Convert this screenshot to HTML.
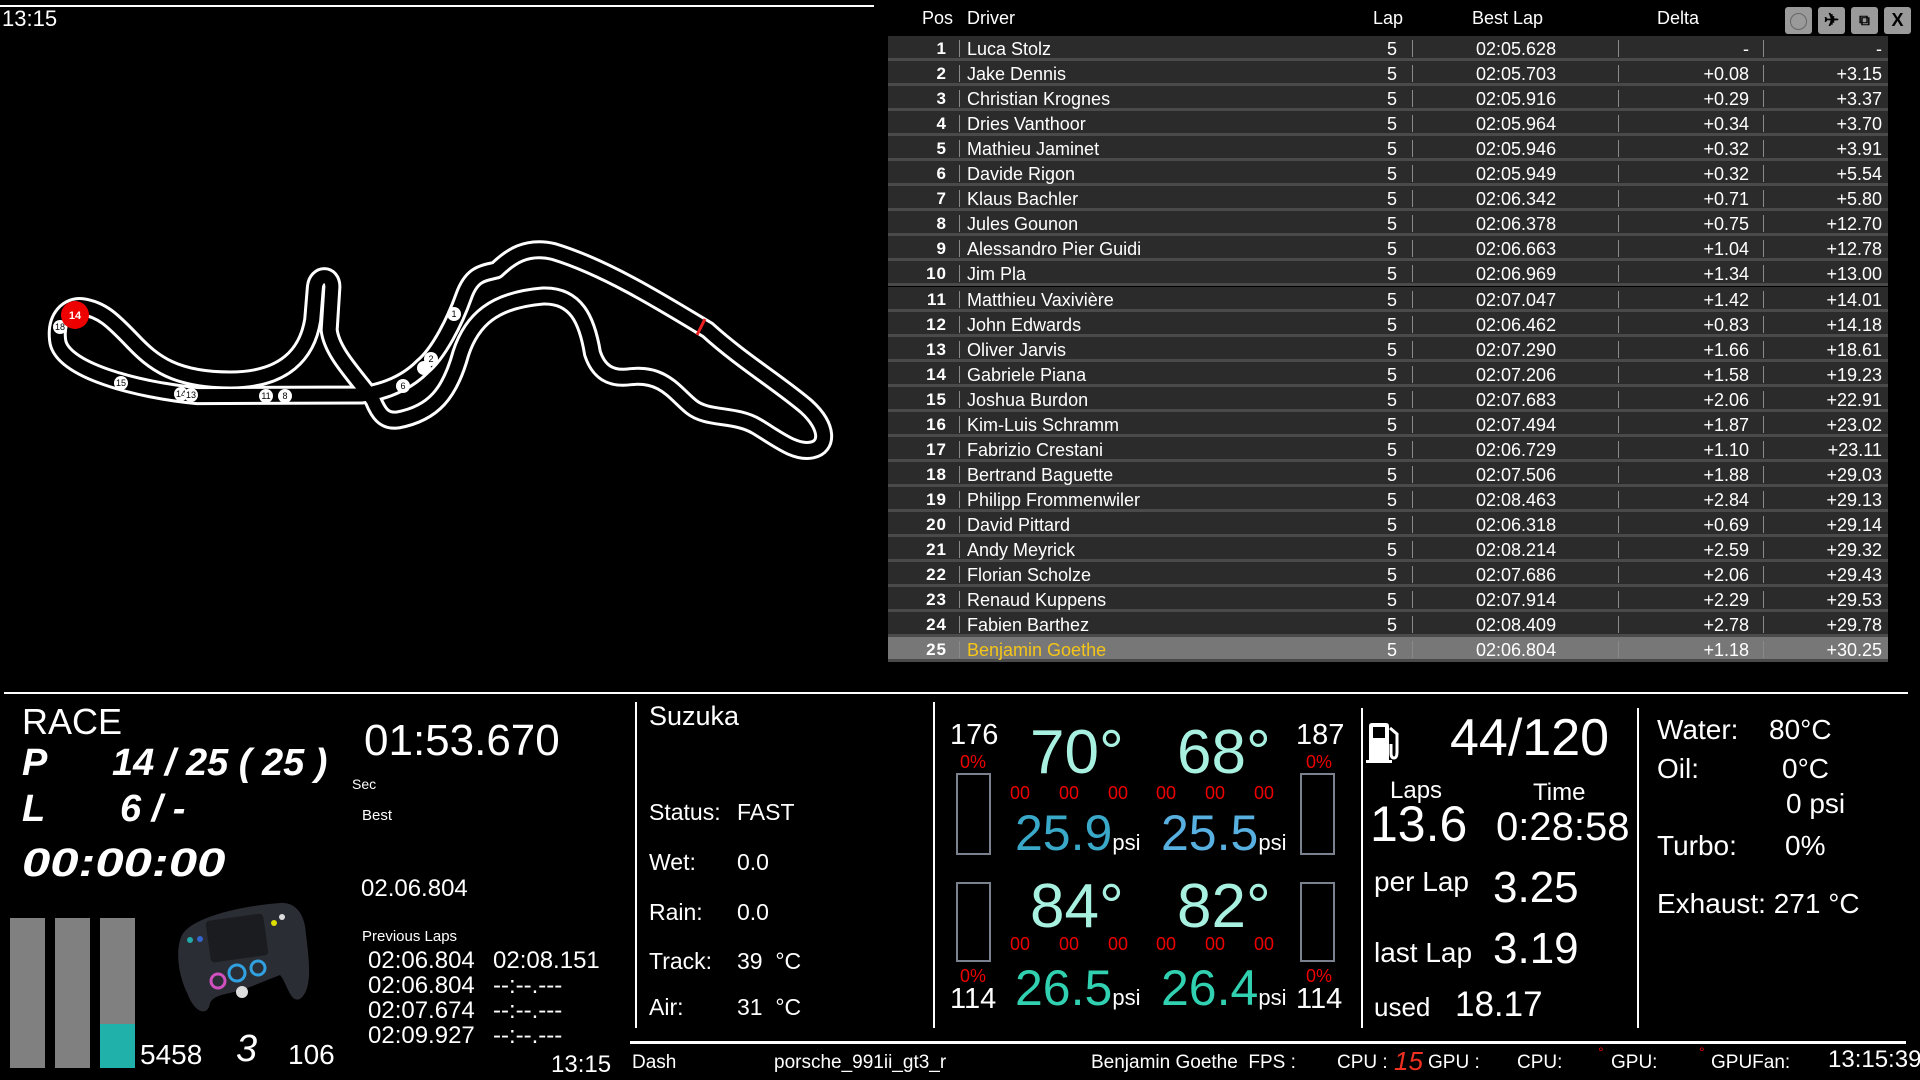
<!DOCTYPE html>
<html><head><meta charset="utf-8"><style>
*{margin:0;padding:0;box-sizing:border-box}
html,body{width:1920px;height:1080px;overflow:hidden}
body{background:#000;color:#fff;font-family:"Liberation Sans",sans-serif;position:relative}
.a{position:absolute;white-space:nowrap;line-height:1}
.row{position:absolute;left:888px;width:1000px;height:25px;background:#2b2b2b;border-bottom:3px solid #4a4a4a;font-size:18px;color:#fff}
.row span{position:absolute;top:3px;white-space:nowrap}
.row .p{right:941px;font-weight:bold;font-size:17px;letter-spacing:1px}
.row .d{left:79px}
.row .l{right:491px}
.row .b{left:588px}
.row .dl{right:139px}
.row .g{right:6px}
.row i{position:absolute;top:4px;width:1px;height:17px;background:#8a8a8a}
.hl{background:#777}
.hl .d{color:#f5c518}
.bi{font-weight:bold;font-style:italic}
.vl{position:absolute;width:2px;background:#fff}
.btn{position:absolute;top:7px;width:27px;height:27px;background:#9a9a9a;border-radius:3px;color:#000;font-size:18px;text-align:center;line-height:27px;font-weight:bold}
.red{color:#e00}
</style></head><body>
<div class="a" style="left:0;top:5px;width:874px;border-top:2px solid #fff"></div>
<div class="a" style="left:2px;top:8px;font-size:22px">13:15</div>

<svg class="a" style="left:0;top:0" width="880" height="690">
<g transform="translate(0,220) scale(0.5486,0.3333)" fill="none" stroke-linejoin="round" stroke-linecap="round">
<path d="M660 525 L360 527 C250 510 110 450 105 360 C100 290 125 255 150 260 C185 268 205 300 240 360 C280 430 320 480 420 480 C520 480 560 400 570 300 L575 200 C578 160 605 160 605 200 L600 330 C605 400 650 470 680 540 C690 580 700 605 725 600 C790 580 820 520 840 400 C860 300 900 240 990 228 C1050 225 1070 300 1080 400 C1090 450 1110 480 1150 470 C1210 460 1230 520 1260 560 C1290 600 1340 580 1380 620 C1420 660 1450 700 1480 690 C1510 680 1510 620 1470 560 C1420 490 1350 420 1290 330 C1200 240 1100 140 1010 95 C960 75 930 110 905 150 C880 160 860 160 845 230 C830 300 800 400 770 440 C740 490 700 515 660 525 Z" stroke="#fff" stroke-width="19" vector-effect="non-scaling-stroke"/>
<path d="M660 525 L360 527 C250 510 110 450 105 360 C100 290 125 255 150 260 C185 268 205 300 240 360 C280 430 320 480 420 480 C520 480 560 400 570 300 L575 200 C578 160 605 160 605 200 L600 330 C605 400 650 470 680 540 C690 580 700 605 725 600 C790 580 820 520 840 400 C860 300 900 240 990 228 C1050 225 1070 300 1080 400 C1090 450 1110 480 1150 470 C1210 460 1230 520 1260 560 C1290 600 1340 580 1380 620 C1420 660 1450 700 1480 690 C1510 680 1510 620 1470 560 C1420 490 1350 420 1290 330 C1200 240 1100 140 1010 95 C960 75 930 110 905 150 C880 160 860 160 845 230 C830 300 800 400 770 440 C740 490 700 515 660 525 Z" stroke="#000" stroke-width="13" vector-effect="non-scaling-stroke"/>
</g>
<line x1="697" y1="335" x2="705" y2="319" stroke="#e22" stroke-width="3"/>
<g fill="#fff" font-size="9" text-anchor="middle" font-family="Liberation Sans">
<circle cx="454" cy="314" r="7"/><text x="454" y="317" fill="#000">1</text>
<circle cx="431" cy="359" r="7"/><text x="431" y="362" fill="#000">2</text>
<circle cx="424" cy="368" r="7"/>
<circle cx="403" cy="386" r="7"/><text x="403" y="389" fill="#000">6</text>
<circle cx="266" cy="396" r="7"/><text x="266" y="399" fill="#000">11</text>
<circle cx="285" cy="396" r="7"/><text x="285" y="399" fill="#000">8</text>
<circle cx="181" cy="394" r="7"/><text x="181" y="397" fill="#000">14</text>
<circle cx="191" cy="395" r="7"/><text x="191" y="398" fill="#000">13</text>
<circle cx="121" cy="383" r="7"/><text x="121" y="386" fill="#000">15</text>
<circle cx="60" cy="327" r="7"/><text x="60" y="330" fill="#000">18</text>
<circle cx="75" cy="315" r="14" fill="#e00"/><text x="75" y="319" font-size="11" font-weight="bold" fill="#fff">14</text>
</g></svg>

<div class="a" style="left:922px;top:9px;font-size:18px">Pos</div>
<div class="a" style="left:967px;top:9px;font-size:18px">Driver</div>
<div class="a" style="left:1373px;top:9px;font-size:18px">Lap</div>
<div class="a" style="left:1472px;top:9px;font-size:18px">Best Lap</div>
<div class="a" style="left:1657px;top:9px;font-size:18px">Delta</div>
<div class="btn" style="left:1785px"><span style="display:inline-block;width:17px;height:17px;border:1px solid #666;border-radius:50%;vertical-align:middle"></span></div>
<div class="btn" style="left:1818px">✈</div>
<div class="btn" style="left:1851px;font-size:15px">⧉</div>
<div class="btn" style="left:1884px">X</div>

<div id="tbl"></div>
<script>
var d=[["Luca Stolz","02:05.628","-","-"],["Jake Dennis","02:05.703","+0.08","+3.15"],["Christian Krognes","02:05.916","+0.29","+3.37"],["Dries Vanthoor","02:05.964","+0.34","+3.70"],["Mathieu Jaminet","02:05.946","+0.32","+3.91"],["Davide Rigon","02:05.949","+0.32","+5.54"],["Klaus Bachler","02:06.342","+0.71","+5.80"],["Jules Gounon","02:06.378","+0.75","+12.70"],["Alessandro Pier Guidi","02:06.663","+1.04","+12.78"],["Jim Pla","02:06.969","+1.34","+13.00"],["Matthieu Vaxivière","02:07.047","+1.42","+14.01"],["John Edwards","02:06.462","+0.83","+14.18"],["Oliver Jarvis","02:07.290","+1.66","+18.61"],["Gabriele Piana","02:07.206","+1.58","+19.23"],["Joshua Burdon","02:07.683","+2.06","+22.91"],["Kim-Luis Schramm","02:07.494","+1.87","+23.02"],["Fabrizio Crestani","02:06.729","+1.10","+23.11"],["Bertrand Baguette","02:07.506","+1.88","+29.03"],["Philipp Frommenwiler","02:08.463","+2.84","+29.13"],["David Pittard","02:06.318","+0.69","+29.14"],["Andy Meyrick","02:08.214","+2.59","+29.32"],["Florian Scholze","02:07.686","+2.06","+29.43"],["Renaud Kuppens","02:07.914","+2.29","+29.53"],["Fabien Barthez","02:08.409","+2.78","+29.78"],["Benjamin Goethe","02:06.804","+1.18","+30.25"]];
var h="";for(var i=0;i<25;i++){var r=d[i];h+='<div class="row'+(i==24?' hl':'')+'" style="top:'+(36+i*25.05)+'px"><span class="p">'+(i+1)+'</span><i style="left:71px"></i><span class="d">'+r[0]+'</span><span class="l">5</span><i style="left:524px"></i><span class="b">'+r[1]+'</span><i style="left:730px"></i><span class="dl">'+r[2]+'</span><i style="left:875px"></i><span class="g">'+r[3]+'</span></div>';}
document.getElementById('tbl').innerHTML=h;
</script>

<div class="a" style="left:4px;top:692px;width:1904px;border-top:2px solid #fff"></div>
<div class="a" style="left:630px;top:1041px;width:1276px;border-top:3px solid #fff"></div>
<div class="vl" style="left:635px;top:702px;height:326px"></div>
<div class="vl" style="left:933px;top:702px;height:326px"></div>
<div class="vl" style="left:1361px;top:708px;height:320px"></div>
<div class="vl" style="left:1637px;top:708px;height:320px"></div>

<div class="a" style="left:22px;top:704px;font-size:36px">RACE</div>
<div class="a bi" style="left:22px;top:744px;font-size:38px">P</div>
<div class="a bi" style="left:112px;top:744px;font-size:38px">14 / 25 ( 25 )</div>
<div class="a bi" style="left:22px;top:790px;font-size:38px">L</div>
<div class="a bi" style="left:120px;top:790px;font-size:38px">6 / -</div>
<div class="a bi" style="left:22px;top:843px;font-size:40px;transform:scaleX(1.27);transform-origin:0 0">00:00:00</div>
<div class="a" style="left:364px;top:719px;font-size:44px">01:53.670</div>
<div class="a" style="left:352px;top:777px;font-size:14px">Sec</div>
<div class="a" style="left:362px;top:808px;font-size:15px">Best</div>
<div class="a" style="left:361px;top:877px;font-size:24px">02.06.804</div>
<div class="a" style="left:362px;top:929px;font-size:15px">Previous Laps</div>
<div class="a" style="left:368px;top:948px;font-size:24px;line-height:25px">02:06.804<br>02:06.804<br>02:07.674<br>02:09.927</div>
<div class="a" style="left:493px;top:948px;font-size:24px;line-height:25px">02:08.151<br>--:--.---<br>--:--.---<br>--:--.---</div>
<div class="a" style="left:10px;top:918px;width:35px;height:150px;background:#808080"></div>
<div class="a" style="left:55px;top:918px;width:35px;height:150px;background:#808080"></div>
<div class="a" style="left:100px;top:918px;width:35px;height:106px;background:#808080"></div>
<div class="a" style="left:100px;top:1024px;width:35px;height:44px;background:#20b2aa"></div>
<div class="a" style="left:140px;top:1041px;font-size:28px">5458</div>
<div class="a" style="left:236px;top:1030px;font-size:38px;font-style:italic">3</div>
<div class="a" style="left:288px;top:1041px;font-size:28px">106</div>
<div class="a" style="left:551px;top:1053px;font-size:24px">13:15</div>
<svg class="a" style="left:170px;top:895px" width="145" height="125" viewBox="0 0 145 125">
<path d="M12 40 C20 25 60 12 110 8 C125 7 135 18 136 40 C140 70 142 95 130 104 C120 108 118 90 110 80 L80 92 C60 100 45 98 40 108 C38 122 25 118 18 100 C8 80 5 55 12 40Z" fill="#2a2d33"/>
<rect x="38" y="22" width="58" height="42" rx="4" fill="#1a1c20" transform="rotate(-8 67 43)"/>
<circle cx="48" cy="86" r="7" fill="none" stroke="#d050c0" stroke-width="3"/>
<circle cx="67" cy="78" r="8" fill="none" stroke="#30a0e0" stroke-width="3"/>
<circle cx="88" cy="73" r="7" fill="none" stroke="#30a0e0" stroke-width="3"/>
<circle cx="72" cy="97" r="6" fill="#ddd"/>
<circle cx="112" cy="22" r="3" fill="#ddd"/><circle cx="104" cy="28" r="3" fill="#dd0"/>
<circle cx="20" cy="45" r="3" fill="#2aa"/><circle cx="30" cy="44" r="3" fill="#36c"/>
</svg>

<div class="a" style="left:649px;top:703px;font-size:27px">Suzuka</div>
<div class="a" style="left:649px;top:801px;font-size:23px">Status:</div><div class="a" style="left:737px;top:801px;font-size:23px">FAST</div>
<div class="a" style="left:649px;top:851px;font-size:23px">Wet:</div><div class="a" style="left:737px;top:851px;font-size:23px">0.0</div>
<div class="a" style="left:649px;top:901px;font-size:23px">Rain:</div><div class="a" style="left:737px;top:901px;font-size:23px">0.0</div>
<div class="a" style="left:649px;top:950px;font-size:23px">Track:</div><div class="a" style="left:737px;top:950px;font-size:23px">39 &nbsp;°C</div>
<div class="a" style="left:649px;top:996px;font-size:23px">Air:</div><div class="a" style="left:737px;top:996px;font-size:23px">31 &nbsp;°C</div>

<div class="a" style="left:950px;top:721px;font-size:29px">176</div>
<div class="a red" style="left:960px;top:753px;font-size:18px">0%</div>
<div class="a" style="left:956px;top:773px;width:35px;height:82px;border:2px solid #7a8290"></div>
<div class="a" style="left:956px;top:882px;width:35px;height:80px;border:2px solid #7a8290"></div>
<div class="a red" style="left:960px;top:967px;font-size:18px">0%</div>
<div class="a" style="left:950px;top:985px;font-size:29px">114</div>
<div class="a" style="left:1296px;top:721px;font-size:29px">187</div>
<div class="a red" style="left:1306px;top:753px;font-size:18px">0%</div>
<div class="a" style="left:1300px;top:773px;width:35px;height:82px;border:2px solid #7a8290"></div>
<div class="a" style="left:1300px;top:882px;width:35px;height:80px;border:2px solid #7a8290"></div>
<div class="a red" style="left:1306px;top:967px;font-size:18px">0%</div>
<div class="a" style="left:1296px;top:985px;font-size:29px">114</div>

<div class="a" style="left:1030px;top:722px;font-size:62px;color:#a8f0e0">70°</div>
<div class="a" style="left:1177px;top:722px;font-size:62px;color:#a8f0e0">68°</div>
<div class="a red" style="left:1010px;top:784px;font-size:18px;word-spacing:24px">00 00 00</div>
<div class="a red" style="left:1156px;top:784px;font-size:18px;word-spacing:24px">00 00 00</div>
<div class="a" style="left:1015px;top:808px;font-size:50px;color:#3aa8c8">25.9<span style="font-size:22px;color:#fff">psi</span></div>
<div class="a" style="left:1161px;top:808px;font-size:50px;color:#58b0e0">25.5<span style="font-size:22px;color:#fff">psi</span></div>
<div class="a" style="left:1030px;top:876px;font-size:62px;color:#a8f0e0">84°</div>
<div class="a" style="left:1177px;top:876px;font-size:62px;color:#a8f0e0">82°</div>
<div class="a red" style="left:1010px;top:935px;font-size:18px;word-spacing:24px">00 00 00</div>
<div class="a red" style="left:1156px;top:935px;font-size:18px;word-spacing:24px">00 00 00</div>
<div class="a" style="left:1015px;top:963px;font-size:50px;color:#30d0b0">26.5<span style="font-size:22px;color:#fff">psi</span></div>
<div class="a" style="left:1161px;top:963px;font-size:50px;color:#30d0b0">26.4<span style="font-size:22px;color:#fff">psi</span></div>

<svg class="a" style="left:1366px;top:722px" width="40" height="42" viewBox="0 0 40 42">
<path d="M3 4 Q3 1 6 1 L20 1 Q23 1 23 4 L23 38 L26 38 L26 41 L0 41 L0 38 L3 38Z" fill="#fff"/>
<rect x="7" y="5" width="12" height="11" fill="#000"/>
<path d="M24 6 L31 12 L31 30 Q31 36 28 36 Q25 36 25 31 L25 22" fill="none" stroke="#fff" stroke-width="3"/>
</svg>
<div class="a" style="left:1450px;top:712px;font-size:52px">44/120</div>
<div class="a" style="left:1390px;top:779px;font-size:24px">Laps</div>
<div class="a" style="left:1533px;top:781px;font-size:24px">Time</div>
<div class="a" style="left:1370px;top:799px;font-size:50px">13.6</div>
<div class="a" style="left:1496px;top:807px;font-size:40px">0:28:58</div>
<div class="a" style="left:1374px;top:868px;font-size:28px">per Lap</div>
<div class="a" style="left:1493px;top:866px;font-size:44px">3.25</div>
<div class="a" style="left:1374px;top:939px;font-size:28px">last Lap</div>
<div class="a" style="left:1493px;top:927px;font-size:44px">3.19</div>
<div class="a" style="left:1374px;top:994px;font-size:26px">used</div>
<div class="a" style="left:1455px;top:987px;font-size:35px">18.17</div>

<div class="a" style="left:1657px;top:716px;font-size:28px">Water:</div><div class="a" style="left:1769px;top:716px;font-size:28px">80°C</div>
<div class="a" style="left:1657px;top:755px;font-size:28px">Oil:</div><div class="a" style="left:1782px;top:755px;font-size:28px">0°C</div>
<div class="a" style="left:1786px;top:790px;font-size:28px">0 psi</div>
<div class="a" style="left:1657px;top:832px;font-size:28px">Turbo:</div><div class="a" style="left:1785px;top:832px;font-size:28px">0%</div>
<div class="a" style="left:1657px;top:890px;font-size:28px">Exhaust: 271 °C</div>

<div class="a" style="left:632px;top:1053px;font-size:19px">Dash</div>
<div class="a" style="left:774px;top:1053px;font-size:19px">porsche_991ii_gt3_r</div>
<div class="a" style="left:1091px;top:1053px;font-size:19px">Benjamin Goethe &nbsp;FPS :</div>
<div class="a" style="left:1337px;top:1053px;font-size:19px">CPU :</div>
<div class="a" style="left:1394px;top:1048px;font-size:26px;color:#f03020;font-style:italic">15</div>
<div class="a" style="left:1428px;top:1053px;font-size:19px">GPU :</div>
<div class="a" style="left:1517px;top:1053px;font-size:19px">CPU:</div>
<div class="a red" style="left:1598px;top:1045px;font-size:14px">°</div>
<div class="a" style="left:1611px;top:1053px;font-size:19px">GPU:</div>
<div class="a red" style="left:1699px;top:1045px;font-size:14px">°</div>
<div class="a" style="left:1711px;top:1053px;font-size:19px">GPUFan:</div>
<div class="a" style="left:1828px;top:1048px;font-size:24px">13:15:39</div>
</body></html>
